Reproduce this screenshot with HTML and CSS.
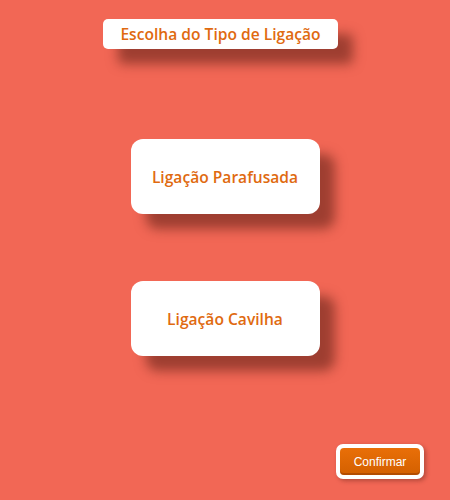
FILE: index.html
```html
<!DOCTYPE html>
<html lang="pt">
<head>
<meta charset="utf-8">
<link rel="stylesheet" href="styles.css">
</head>
<body>
<main class="page">
  <div class="title">Escolha do Tipo de Ligação</div>
  <button class="option option-first">Ligação Parafusada</button>
  <button class="option option-second">Ligação Cavilha</button>
  <div class="confirm-wrap"><button class="confirm">Confirmar</button></div>
</main>
</body>
</html>
```
FILE: styles.css
```css
html, body {
  margin: 0;
  padding: 0;
  background: #f26755;
}
.page {
  width: 450px;
  height: 500px;
  display: flex;
  flex-direction: column;
  align-items: center;
  font-family: "Open Sans", sans-serif;
}
.title {
  margin-top: 19px;
  margin-right: 9px;
  width: 235px;
  height: 30px;
  box-sizing: border-box;
  padding-bottom: 1px;
  background: #fff;
  border-radius: 5px;
  display: flex;
  align-items: center;
  justify-content: center;
  color: #e06a10;
  font-weight: 600;
  font-size: 15.6px;
  box-shadow: 15px 15px 12px rgba(90, 30, 20, 0.55);
}
.option {
  width: 189px;
  height: 75px;
  border: none;
  background: #fff;
  border-radius: 12px;
  color: #e06a10;
  font-family: "Open Sans", sans-serif;
  font-weight: 600;
  font-size: 15.6px;
  box-shadow: 15px 15px 12px rgba(90, 30, 20, 0.55);
  padding: 0;
}
.option-first { margin-top: 90px; }
.option-second { margin-top: 67px; }
.confirm-wrap {
  align-self: flex-end;
  margin-top: 88px;
  margin-right: 26px;
  background: #fff;
  border-radius: 7px;
  padding: 4px;
  box-shadow: 2px 2px 4px rgba(90, 30, 20, 0.4);
}
.confirm {
  display: block;
  width: 80px;
  height: 27px;
  border: none;
  border-radius: 4px;
  background: linear-gradient(#e96f08, #d36000);
  color: #fff;
  font-family: "Liberation Sans", Arial, sans-serif;
  font-size: 12px;
  padding: 0;
  box-shadow: inset 0 -2px 0 rgba(120, 40, 0, 0.35);
}
```
